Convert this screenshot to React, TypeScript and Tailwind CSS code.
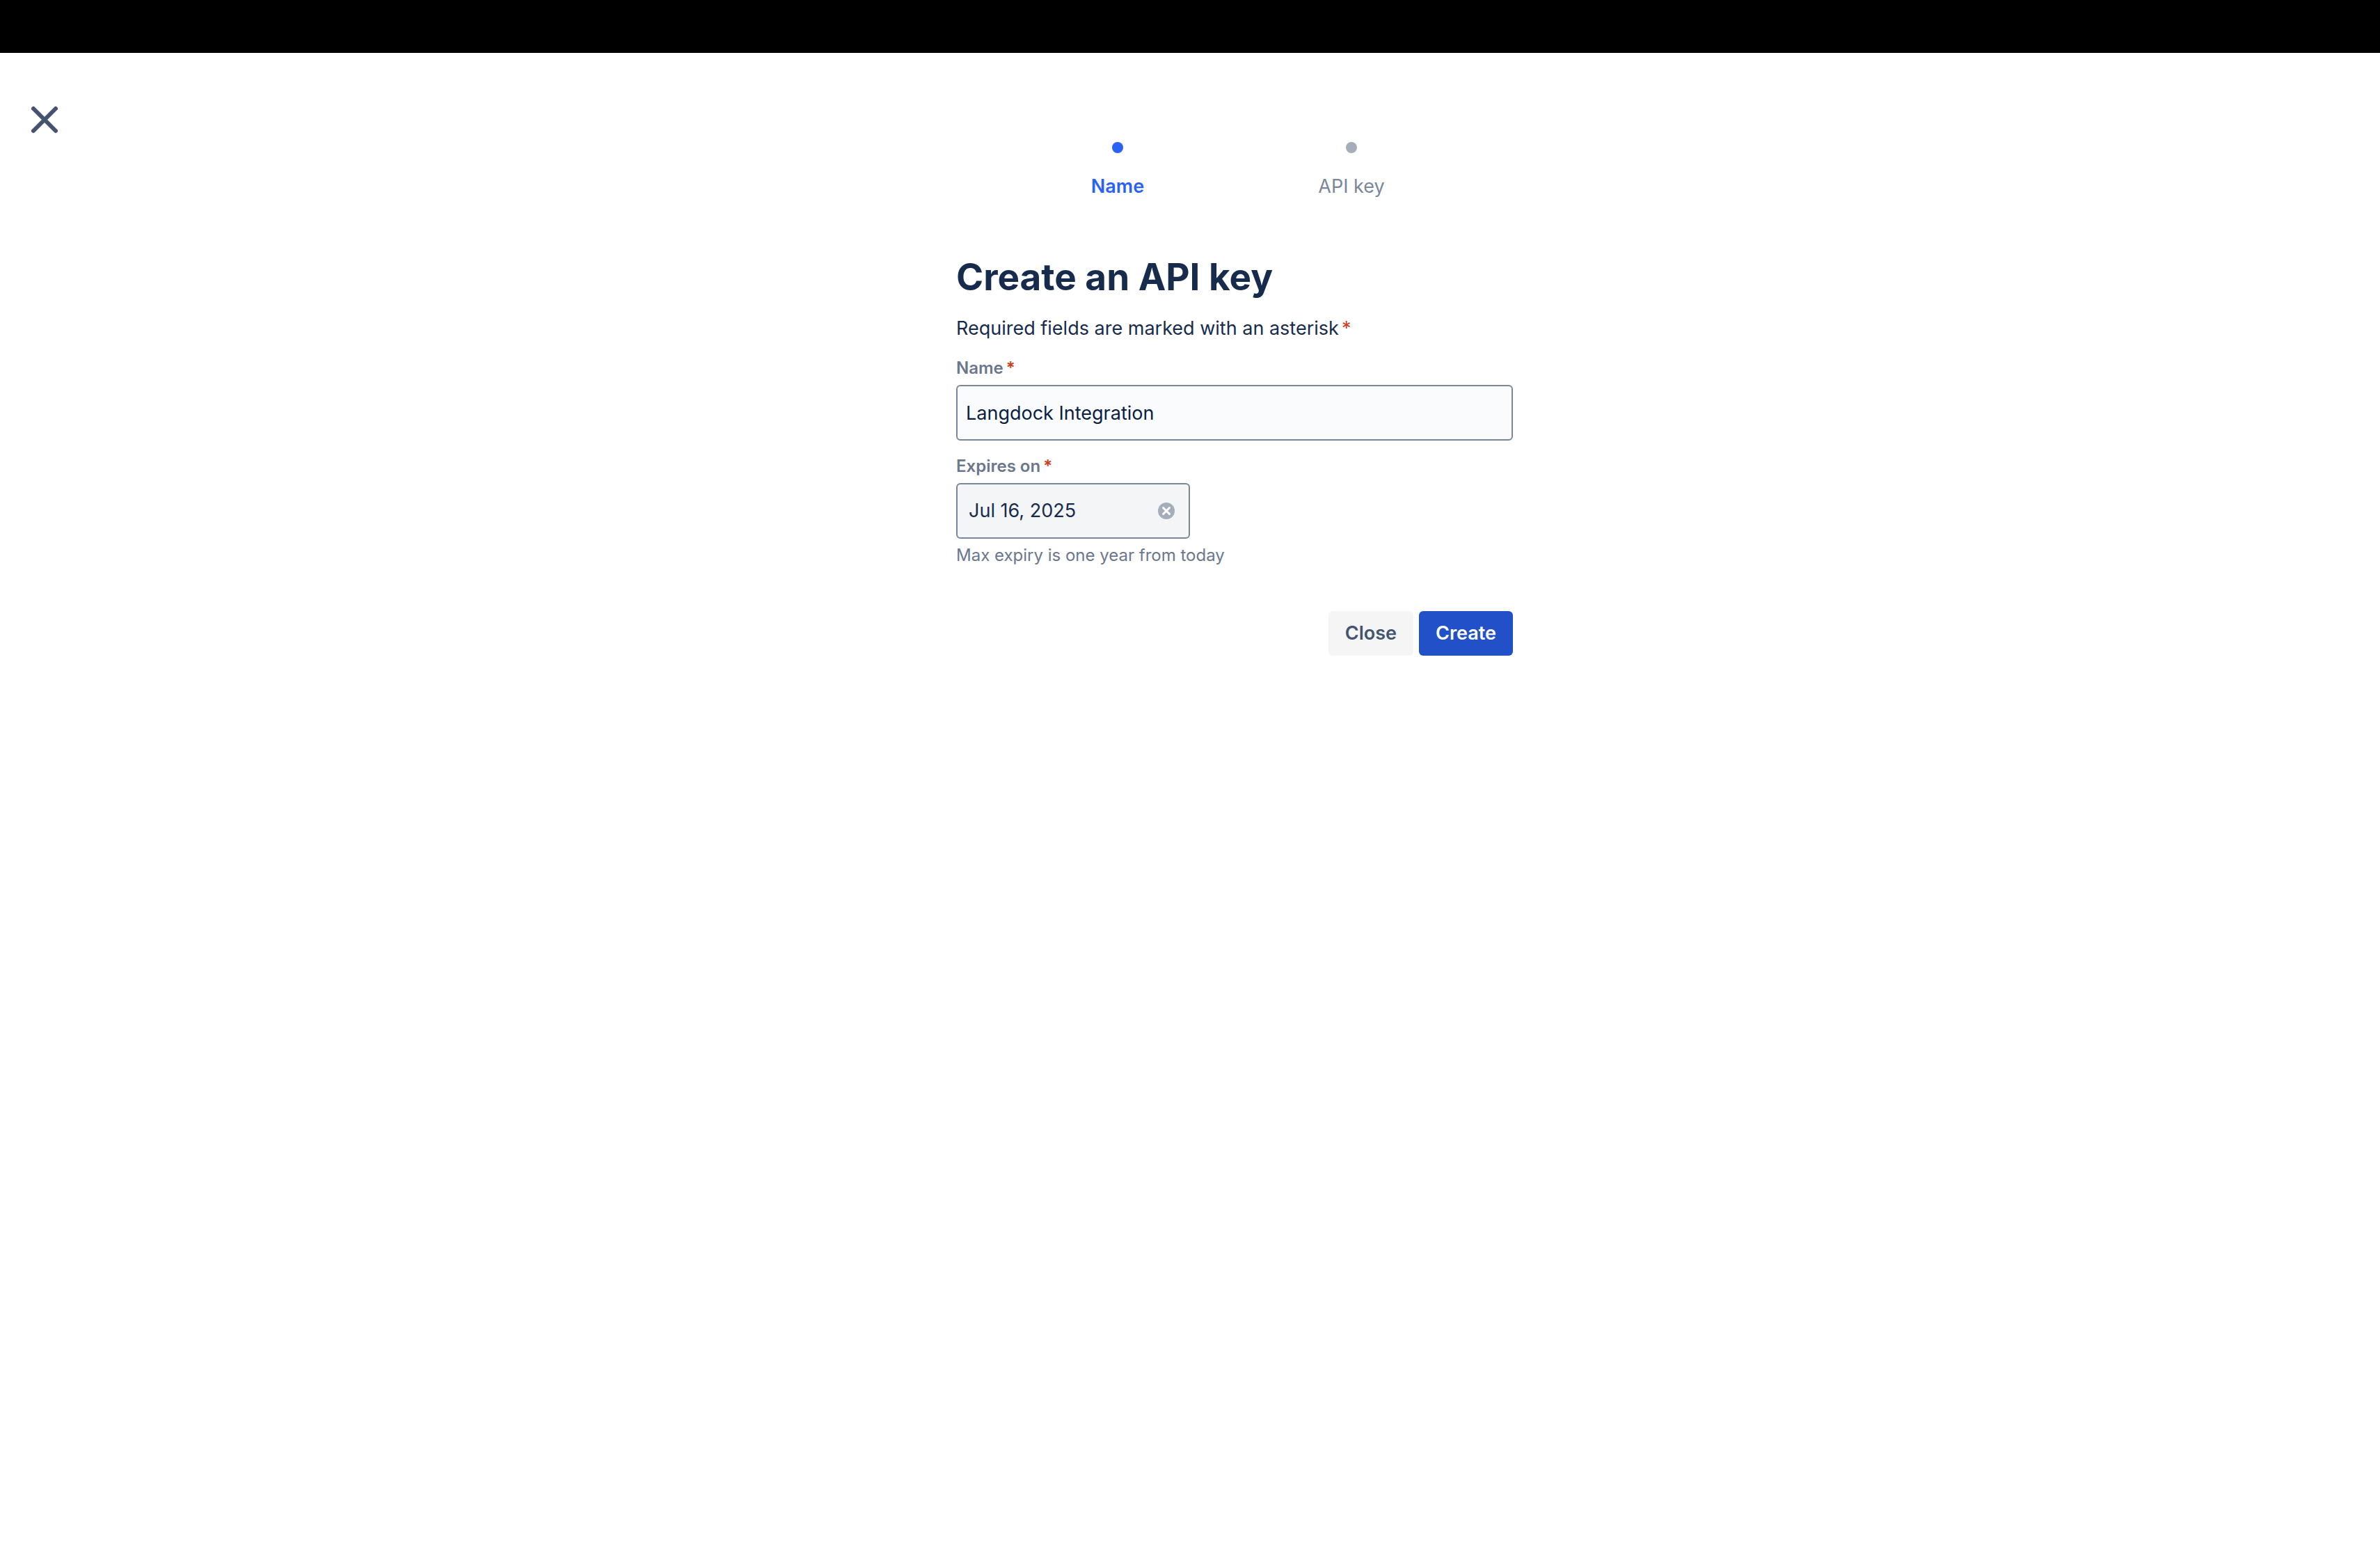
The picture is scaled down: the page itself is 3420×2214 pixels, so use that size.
import { useState } from "react";

function Asterisk() {
  return (
    <span aria-hidden="true" className="pl-1 text-[#cb4020]">
      *
    </span>
  );
}

function CloseIcon() {
  return (
    <svg viewBox="0 0 48 48" className="size-12" fill="none" stroke="currentColor" strokeWidth="6" strokeLinecap="round">
      <path d="M8 8 40 40M40 8 8 40" />
    </svg>
  );
}

function ClearIcon() {
  return (
    <svg viewBox="0 0 24 24" className="size-6" fill="none">
      <circle cx="12" cy="12" r="12" fill="#a5adba" />
      <path d="M7.5 7.5 16.5 16.5M16.5 7.5 7.5 16.5" stroke="#ffffff" strokeWidth="3" strokeLinecap="round" />
    </svg>
  );
}

function Steps() {
  return (
    <ol className="flex justify-center gap-4 text-[27px] leading-10">
      <li aria-current="step" className="flex w-80 flex-col items-center gap-7 font-semibold text-[#2962f5]">
        <span className="size-4 rounded-full bg-[#2962f5]" />
        <span>Name</span>
      </li>
      <li className="flex w-80 flex-col items-center gap-7 text-[#7a869a]">
        <span className="size-4 rounded-full bg-[#a5adba]" />
        <span>API key</span>
      </li>
    </ol>
  );
}

export default function App() {
  const [name, setName] = useState("Langdock Integration");
  const [date, setDate] = useState("Jul 16, 2025");

  return (
    <div className="min-h-screen bg-white font-['Inter',sans-serif] text-[#172b4d]">
      <div className="h-[76px] bg-black" />
      <div className="flex">
        <aside className="flex w-32 shrink-0 justify-center pt-[72px]">
          <button type="button" aria-label="Close dialog" className="size-12 text-[#44546f]">
            <CloseIcon />
          </button>
        </aside>
        <main className="flex flex-1 justify-center pt-32">
          <div className="w-full max-w-[800px]">
            <Steps />
            <form className="pt-20" onSubmit={(e) => e.preventDefault()}>
              <h1 className="text-[53px] leading-[60px] font-bold">Create an API key</h1>
              <p className="mt-6 text-[27px] leading-10">
                Required fields are marked with an asterisk
                <Asterisk />
              </p>
              <label htmlFor="key-name" className="mt-[21px] block text-2xl leading-8 font-semibold text-[#6b778c]">
                Name
                <Asterisk />
              </label>
              <input
                id="key-name"
                value={name}
                onChange={(e) => setName(e.target.value)}
                className="mt-2 block h-20 w-full rounded-md border-2 border-[#7a869a] bg-[#fafbfd] px-3 text-[27px] leading-10 text-[#091e42] outline-none"
              />
              <label htmlFor="key-expiry" className="mt-[21px] block text-2xl leading-8 font-semibold text-[#6b778c]">
                Expires on
                <Asterisk />
              </label>
              <div className="mt-2 flex h-20 w-[336px] items-center rounded-md border-2 border-[#7a869a] bg-[#f4f5f7] pr-5 pl-4">
                <input
                  id="key-expiry"
                  value={date}
                  onChange={(e) => setDate(e.target.value)}
                  className="min-w-0 flex-1 bg-transparent text-[27px] leading-10 outline-none"
                />
                <button type="button" aria-label="Clear date" onClick={() => setDate("")}>
                  <ClearIcon />
                </button>
              </div>
              <p className="mt-2 text-2xl leading-8 text-[#6b778c]">Max expiry is one year from today</p>
              <div className="mt-16 flex justify-end gap-2 text-[27px] leading-10 font-semibold">
                <button type="button" className="h-16 rounded-md bg-[#f5f5f5] px-6 text-[#44546f]">
                  Close
                </button>
                <button type="submit" className="h-16 rounded-md bg-[#2150c8] px-6 text-white">
                  Create
                </button>
              </div>
            </form>
          </div>
        </main>
      </div>
    </div>
  );
}
